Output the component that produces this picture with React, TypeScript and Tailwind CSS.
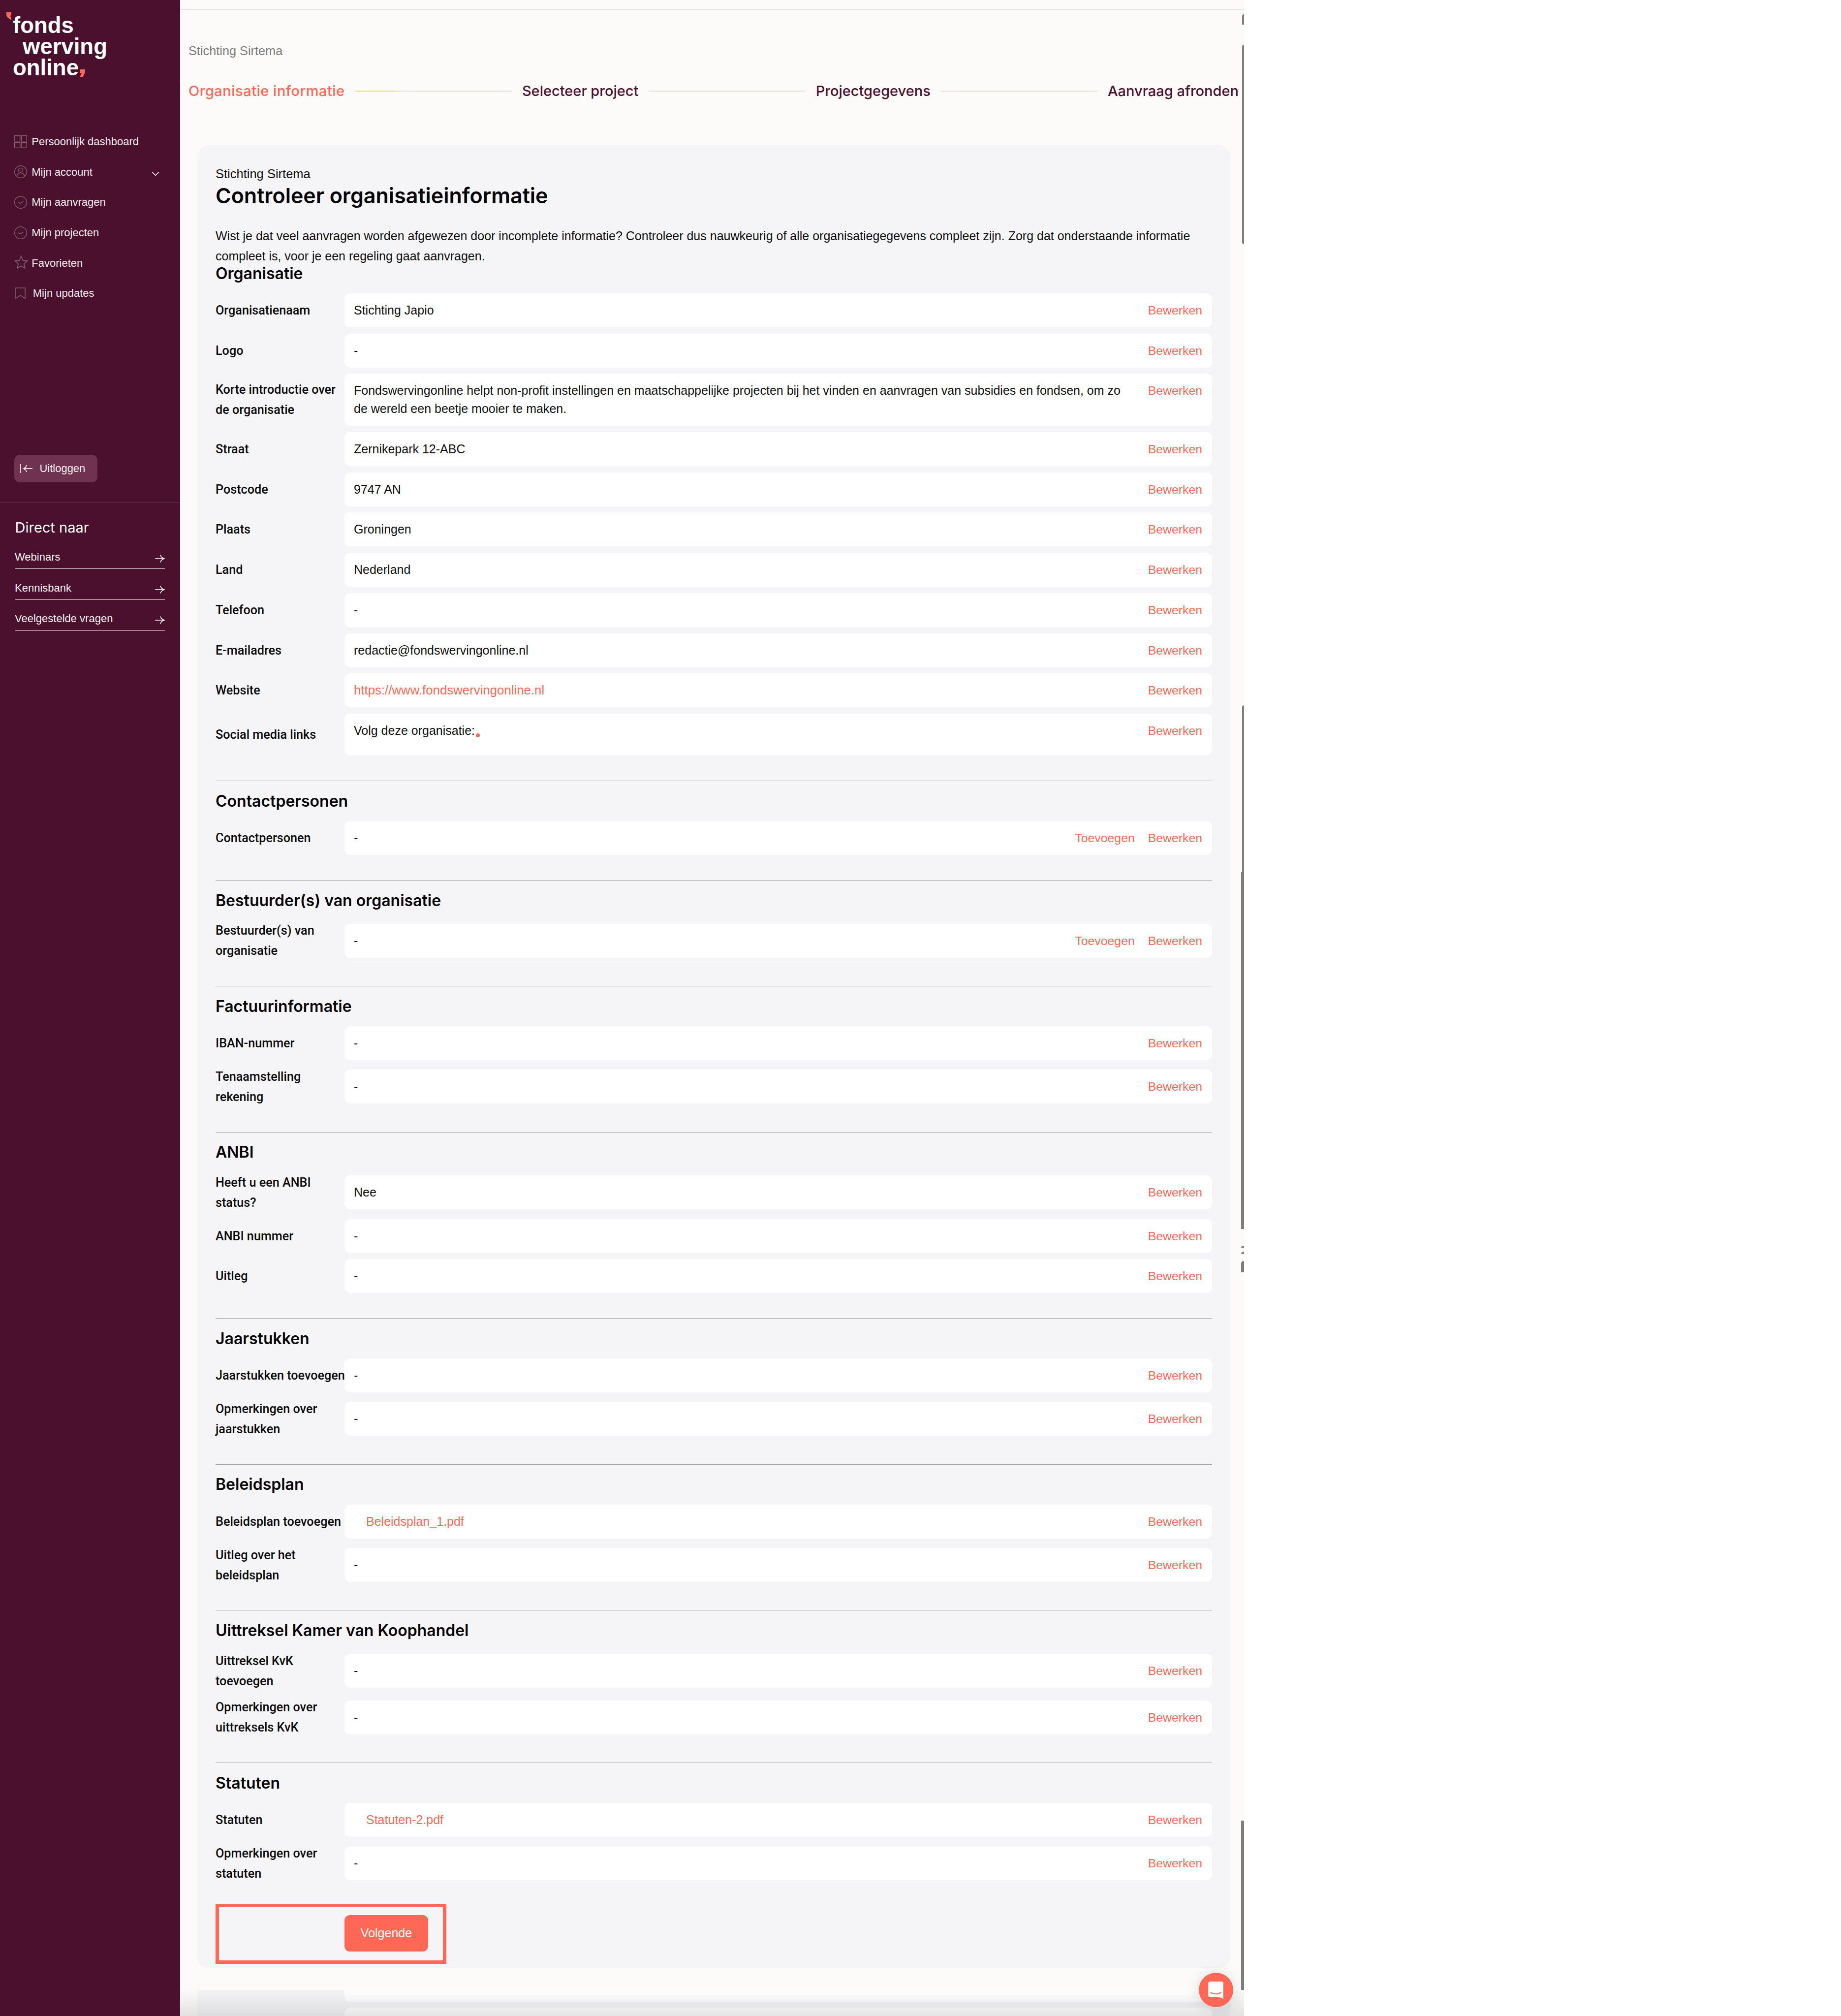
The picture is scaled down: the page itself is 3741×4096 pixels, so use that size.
import { ChevronDown } from 'lucide-react';

type Row = { label: string; value?: string; kind?: 'link' | 'file'; add?: boolean; tall?: boolean; dot?: boolean };
type Section = { title: string; rows: Row[] };

const organisatie: Row[] = [
  { label: 'Organisatienaam', value: 'Stichting Japio' },
  { label: 'Logo' },
  {
    label: 'Korte introductie over\nde organisatie',
    value:
      'Fondswervingonline helpt non-profit instellingen en maatschappelijke projecten bij het vinden en aanvragen van subsidies en fondsen, om zo\nde wereld een beetje mooier te maken.',
  },
  { label: 'Straat', value: 'Zernikepark 12-ABC' },
  { label: 'Postcode', value: '9747 AN' },
  { label: 'Plaats', value: 'Groningen' },
  { label: 'Land', value: 'Nederland' },
  { label: 'Telefoon' },
  { label: 'E-mailadres', value: 'redactie@fondswervingonline.nl' },
  { label: 'Website', value: 'https://www.fondswervingonline.nl', kind: 'link' },
  { label: 'Social media links', value: 'Volg deze organisatie:', tall: true, dot: true },
];

const sections: Section[] = [
  { title: 'Contactpersonen', rows: [{ label: 'Contactpersonen', add: true }] },
  { title: 'Bestuurder(s) van organisatie', rows: [{ label: 'Bestuurder(s) van\norganisatie', add: true }] },
  {
    title: 'Factuurinformatie',
    rows: [{ label: 'IBAN-nummer' }, { label: 'Tenaamstelling\nrekening' }],
  },
  {
    title: 'ANBI',
    rows: [{ label: 'Heeft u een ANBI\nstatus?', value: 'Nee' }, { label: 'ANBI nummer' }, { label: 'Uitleg' }],
  },
  {
    title: 'Jaarstukken',
    rows: [{ label: 'Jaarstukken toevoegen' }, { label: 'Opmerkingen over\njaarstukken' }],
  },
  {
    title: 'Beleidsplan',
    rows: [
      { label: 'Beleidsplan toevoegen', value: 'Beleidsplan_1.pdf', kind: 'file' },
      { label: 'Uitleg over het\nbeleidsplan' },
    ],
  },
  {
    title: 'Uittreksel Kamer van Koophandel',
    rows: [{ label: 'Uittreksel KvK\ntoevoegen' }, { label: 'Opmerkingen over\nuittreksels KvK' }],
  },
  {
    title: 'Statuten',
    rows: [
      { label: 'Statuten', value: 'Statuten-2.pdf', kind: 'file' },
      { label: 'Opmerkingen over\nstatuten' },
    ],
  },
];

const iconStroke = '#82606f';

function GridIcon() {
  return (
    <svg width="26" height="26" viewBox="0 0 26 26" fill="none" stroke={iconStroke} strokeWidth="1.4">
      <rect x="0.7" y="0.7" width="11" height="11" />
      <rect x="14.3" y="0.7" width="11" height="11" />
      <rect x="0.7" y="14.3" width="11" height="11" />
      <rect x="14.3" y="14.3" width="11" height="11" />
    </svg>
  );
}

function UserIcon() {
  return (
    <svg width="26" height="26" viewBox="0 0 26 26" fill="none" stroke={iconStroke} strokeWidth="1.4">
      <circle cx="13" cy="13" r="12.3" />
      <circle cx="13" cy="9.8" r="4.4" />
      <path d="M5.2 22c.6-4.2 3.6-6.6 7.8-6.6s7.2 2.4 7.8 6.6" />
    </svg>
  );
}

function CheckIcon() {
  return (
    <svg width="26" height="26" viewBox="0 0 26 26" fill="none" stroke={iconStroke} strokeWidth="1.4">
      <circle cx="13" cy="13" r="12.3" />
      <path d="M7.8 12.6l4.2 2.8 6.4-4" />
    </svg>
  );
}

function StarIcon() {
  return (
    <svg width="28" height="28" viewBox="0 0 28 28" fill="none" stroke={iconStroke} strokeWidth="1.6" className="-mt-[2px]">
      <path d="M14 1.6l3.500 8.600 9.300.7-7.100 6 2.200 9.100L14 21.200l-7.900 4.800 2.200-9.100-7.100-6 9.300-.7z" />
    </svg>
  );
}

function BookmarkIcon() {
  return (
    <svg width="26" height="24" viewBox="0 0 26 24" fill="none" stroke={iconStroke} strokeWidth="1.5" className="ml-[2px]">
      <path d="M1 1h19v21.400l-9.500-6.200L1 22.400z" />
    </svg>
  );
}

function SmallArrow() {
  return (
    <svg width="20" height="18" viewBox="0 0 20 18" fill="none" stroke="#fff" strokeWidth="1.5" className="mb-[3px] shrink-0">
      <path d="M0 9h19" />
      <path d="M11 1.500c.8 3.600 3.400 6.200 8 7.500-4.600 1.300-7.200 3.900-8 7.500" />
    </svg>
  );
}

function Logo() {
  return (
    <div className="relative ml-[26px] pt-[30px] font-['Liberation_Sans',sans-serif] text-[45.500px] leading-[43px] font-bold text-white">
      <svg width="10" height="16" viewBox="0 0 10 16" className="absolute -left-[13px] top-[25px]" fill="#ff6857">
        <path d="M0 0h10v6.500h-2L10 16 2 10 0 6z" />
      </svg>
      <div>fonds</div>
      <div className="pl-[20px]">werving</div>
      <div className="flex">
        online
        <svg width="11" height="16" viewBox="0 0 11 16" className="ml-[2px] mt-[25px]" fill="#ff6857">
          <path d="M1 0h10v6L6 16H0l4-8.500H1z" />
        </svg>
      </div>
    </div>
  );
}

function NavItem({ icon, label, wide, chevron }: { icon: React.ReactNode; label: string; wide?: boolean; chevron?: boolean }) {
  return (
    <div className="flex h-[61.600px] items-center pl-[28.600px] pr-[37.500px] text-[22px] text-[#f3ecef]">
      <span className={wide ? 'flex w-[38.200px] shrink-0' : 'flex w-[35.700px] shrink-0'}>{icon}</span>
      <span>{label}</span>
      {chevron && <ChevronDown size={26} strokeWidth={1.5} className="ml-auto mt-[8px] text-white" />}
    </div>
  );
}

function Sidebar() {
  return (
    <aside className="w-[366px] shrink-0 bg-[#4a102e] font-['Liberation_Sans',sans-serif]">
      <Logo />
      <nav className="mt-[98px]">
        <NavItem icon={<GridIcon />} label="Persoonlijk dashboard" />
        <NavItem icon={<UserIcon />} label="Mijn account" chevron />
        <NavItem icon={<CheckIcon />} label="Mijn aanvragen" />
        <NavItem icon={<CheckIcon />} label="Mijn projecten" />
        <NavItem icon={<StarIcon />} label="Favorieten" />
        <NavItem icon={<BookmarkIcon />} label="Mijn updates" wide />
      </nav>
      <button className="ml-[29.400px] mt-[297px] flex h-[56px] w-[169px] items-center gap-[14px] rounded-[11px] bg-[#6f3351] pl-[12px] text-[22px] text-[#f6eff2]">
        <svg width="25" height="20" viewBox="0 0 25 20" fill="none" stroke="#fff" strokeWidth="1.6">
          <path d="M1 1v18" />
          <path d="M7 10h18" />
          <path d="M13 3c-.8 3.200-2.800 5.600-6 7 3.200 1.400 5.200 3.800 6 7" />
        </svg>
        Uitloggen
      </button>
      <div className="mt-[41px] h-px bg-[#6b3a54]" />
      <h3 className="mt-[30px] pl-[30.500px] font-['Inter',sans-serif] text-[29px] leading-[40px] font-normal text-white">Direct naar</h3>
      <div className="ml-[30px] mt-[2.500px] w-[305px]">
        {['Webinars', 'Kennisbank', 'Veelgestelde vragen'].map((link) => (
          <div key={link} className="flex h-[62.400px] items-end justify-between border-b border-white pb-[8px] text-[22px] leading-[30px] text-[#f6eff2]">
            <span>{link}</span>
            <SmallArrow />
          </div>
        ))}
      </div>
    </aside>
  );
}

function Step({ label, active }: { label: string; active?: boolean }) {
  return (
    <span className={active ? "whitespace-nowrap font-['Inter',sans-serif] text-[29px] font-medium tracking-[0.5px] text-[#ff6857]" : "whitespace-nowrap font-['Inter',sans-serif] text-[29px] font-medium text-[#4a102e]"}>
      {label}
    </span>
  );
}

function StepLine({ progress }: { progress?: boolean }) {
  return (
    <div className="flex h-[3px] flex-1 bg-[#eee7df]">
      {progress && <div className="h-full w-1/4 bg-[#e3f07e]" />}
    </div>
  );
}

function InfoRow({ row }: { row: Row }) {
  const valueClass = row.kind === 'link' ? 'text-[25.800px] text-[#ff6857]' : row.kind === 'file' ? 'pl-[25px] text-[#ff6857]' : 'text-[#111111]';
  return (
    <div className="mb-[12.700px] flex items-center">
      <div className="w-[262px] shrink-0 whitespace-pre font-['Roboto',sans-serif] text-[25.200px] leading-[41px] font-medium text-[#0b0b0b]">
        {row.label}
      </div>
      <div className={row.tall ? 'flex min-h-[85.400px] flex-1 items-start justify-between rounded-[12px] bg-white py-[16px] pl-[19px] pr-[20px] leading-[37px]' : 'flex min-h-[69px] flex-1 items-start justify-between rounded-[12px] bg-white py-[16px] pl-[19px] pr-[20px] leading-[37px]'}>
        <span className={`whitespace-pre ${valueClass}`}>
          {row.value ?? '-'}
          {row.dot && <span className="ml-[2px] inline-block h-[7.500px] w-[7.500px] translate-y-[5px] rounded-full bg-[#ff6857]" />}
        </span>
        <span className="flex gap-[27px] text-[24.800px] text-[#ff6857]">
          {row.add && <span>Toevoegen</span>}
          <span>Bewerken</span>
        </span>
      </div>
    </div>
  );
}

function SectionBlock({ section }: { section: Section }) {
  return (
    <section>
      <div className="mt-[50.700px] h-px bg-[#a5a3a8]" />
      <h2 className="flex h-[81.300px] items-center font-['Inter',sans-serif] text-[32px] font-semibold text-[#050505]">{section.title}</h2>
      {section.rows.map((row) => (
        <InfoRow key={row.label} row={row} />
      ))}
    </section>
  );
}

export default function App() {
  return (
    <div className="flex h-[4096px] w-[3741px] overflow-hidden bg-white font-['Liberation_Sans',sans-serif] text-[25px]">
      <Sidebar />
      <main className="relative w-[2162px] shrink-0 bg-[#fcfbf9]">
        <div className="mt-[18px] h-px bg-[#9c8391]" />
        <div className="ml-[17px] mt-[69px] text-[25.300px] leading-[30px] text-[#7c7c7c]">Stichting Sirtema</div>
        <div className="ml-[17px] mt-[47px] flex h-[40px] w-[2134px] items-center gap-[21px]">
          <Step label="Organisatie informatie" active />
          <StepLine progress />
          <Step label="Selecteer project" />
          <StepLine />
          <Step label="Projectgegevens" />
          <StepLine />
          <Step label="Aanvraag afronden" />
        </div>

        <div className="ml-[35px] mt-[90px] h-[3704px] w-[2099px] rounded-[24px] bg-[#f5f4f7] px-[37px] pt-[37.500px]">
          <div className="text-[25.500px] leading-[41px] text-[#111111]">Stichting Sirtema</div>
          <h1 className="h-[47px] font-['Inter',sans-serif] text-[43px] leading-[47px] font-semibold text-[#050505]">Controleer organisatieinformatie</h1>
          <p className="mt-[38px] leading-[41px] text-[#111111]">
            Wist je dat veel aanvragen worden afgewezen door incomplete informatie? Controleer dus nauwkeurig of alle organisatiegegevens compleet zijn. Zorg dat onderstaande informatie
            <br />
            compleet is, voor je een regeling gaat aanvragen.
          </p>
          <h2 className="mb-[25.500px] h-[30px] font-['Inter',sans-serif] text-[32px] leading-[30px] font-semibold text-[#050505]">Organisatie</h2>
          {organisatie.map((row) => (
            <InfoRow key={row.label} row={row} />
          ))}
          {sections.map((section) => (
            <SectionBlock key={section.title} section={section} />
          ))}
          <div className="mt-[41px] flex h-[122px] w-[469px] border-[7.500px] border-[#ff6857] pl-[255px] pt-[16px]">
            <button className="h-[74px] w-[170px] rounded-[11px] bg-[#ff6857] text-[25px] font-medium text-white">Volgende</button>
          </div>
        </div>

        {/* next card, cut off by the bottom of the page */}
        <div className="ml-[35px] mt-[44.400px] h-[60px] w-[2099px] bg-[#f5f4f7] pl-[299px] pr-[37.500px]">
          <div className="h-[24px] rounded-b-[12px] bg-white" />
          <div className="mt-[12px] h-[40px] rounded-t-[12px] bg-white" />
        </div>

        <div className="pointer-events-none absolute inset-x-0 bottom-0 h-[56px] bg-gradient-to-b from-transparent to-black/10" />

        {/* scrollbar fragments */}
        <div className="absolute left-[2157.500px] top-[29px] h-[21px] w-[4.500px] rounded-tl-[4px] bg-[#7f7e7c]" />
        <div className="absolute left-[2157.500px] top-[91px] h-[405px] w-[4.500px] rounded-l-[4px] bg-[#7f7e7c]" />
        <div className="absolute left-[2157.500px] top-[1433px] h-[339px] w-[4.500px] rounded-tl-[4px] bg-[#7f7e7c]" />
        <div className="absolute left-[2156px] top-[1772px] h-[67px] w-[6px] bg-[#7f7e7c]" />
        <div className="absolute left-[2156px] top-[1839px] h-[658px] w-[6px] bg-[#7f7e7c]" />
        <div className="absolute left-[2156px] top-[2531px] h-[5px] w-[6px] rounded-tl-[5px] bg-[#7f7e7c]" />
        <div className="absolute left-[2156px] top-[2543px] h-[5px] w-[6px] rounded-tl-[5px] bg-[#7f7e7c]" />
        <div className="absolute left-[2156px] top-[2562px] h-[23px] w-[6px] rounded-tl-[5px] bg-[#7f7e7c]" />
        <div className="absolute left-[2156px] top-[3699px] h-[344px] w-[6px] bg-[#7f7e7c]" />

        {/* chat bubble */}
        <div className="absolute left-[2069.500px] top-[4008px] flex h-[70px] w-[70px] items-center justify-center rounded-full bg-[#ff6857] shadow-[0_2px_30px_rgba(0,0,0,0.12)]">
          <svg width="31" height="35" viewBox="0 0 42 48" className="mt-[1px]">
            <path d="M5 0h32a5 5 0 0 1 5 5v43l-13-5H5a5 5 0 0 1-5-5V5a5 5 0 0 1 5-5z" fill="#fff" />
            <path d="M6 30c9 6 21 6 30 0" fill="none" stroke="#ff6857" strokeWidth="2.500" />
          </svg>
        </div>
      </main>
    </div>
  );
}
